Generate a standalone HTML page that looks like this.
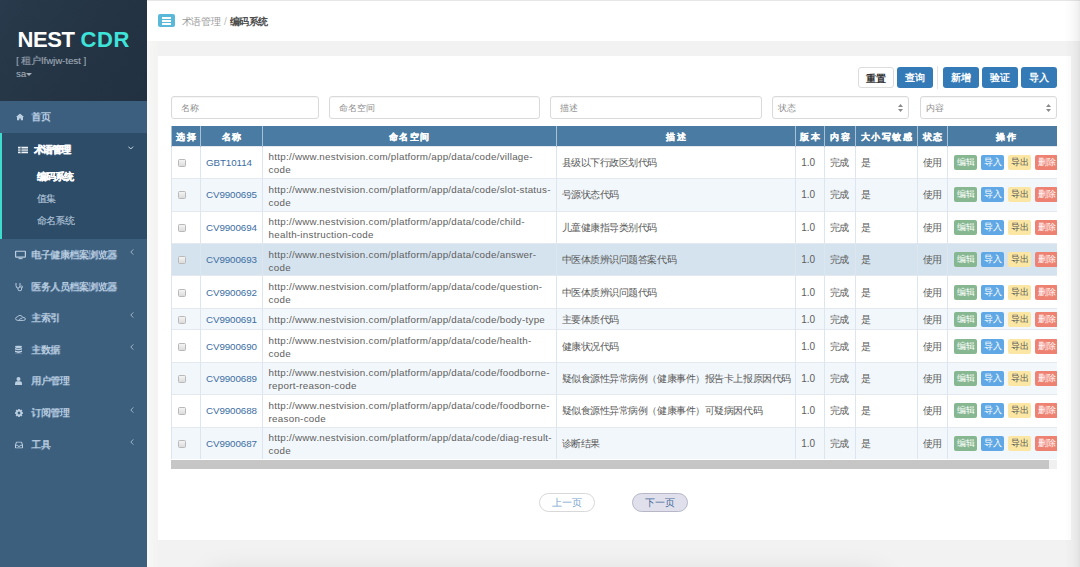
<!DOCTYPE html>
<html><head><meta charset="utf-8">
<style>
*{box-sizing:border-box;margin:0;padding:0}
html,body{width:1080px;height:567px;overflow:hidden}
body{position:relative;background:#f2f2f2;font-family:"Liberation Sans",sans-serif;color:#555}
.abs{position:absolute}
#side{left:0;top:0;width:147px;height:567px;background:#3c5f7e}
#logo{left:0;top:0;width:147px;height:101px;background:linear-gradient(120deg,#283a4b 0%,#243444 55%,#223141 100%)}
#logo .t{left:17.5px;top:27px;font-size:22px;line-height:25px;font-weight:bold;color:#fff;white-space:nowrap}
#logo .t .c{color:#3ee4da;letter-spacing:0.6px}#logo .t .n{letter-spacing:-0.45px}
#logo .ten{left:16px;top:55px;font-size:9.6px;color:#97a3af;white-space:nowrap;text-shadow:0.4px 0 0 rgba(151,163,175,0.5)}
#logo .sa{left:16px;top:68px;font-size:9.5px;color:#97a3af;white-space:nowrap;text-shadow:0.4px 0 0 rgba(151,163,175,0.5)}
.mi{position:absolute;left:0;width:147px;height:32px;color:#bcd0e3;font-size:9.6px;letter-spacing:-0.45px;font-weight:500;white-space:nowrap;text-shadow:0.6px 0 0 rgba(188,208,227,0.75),0 0.5px 0 rgba(188,208,227,0.5)}
.mi .tx{position:absolute;left:31px;top:10px;line-height:12px}
.mi .ic{position:absolute;left:15px;top:50%;transform:translateY(-50%)}
.mi .ch{position:absolute;left:129.5px;top:9.5px}.caret{display:inline-block;width:0;height:0;border-left:3px solid transparent;border-right:3px solid transparent;border-top:3.5px solid #a3aeb9;margin-left:0;vertical-align:middle}
#home{top:101px;background:#3c5f7f}
#open{left:0;top:133px;width:147px;height:106px;background:#2d4c68;border-left:2px solid #3ddccf}
.sub{position:absolute;left:34.5px;font-size:10px;letter-spacing:-0.6px;font-weight:500;color:#a9bfd3;white-space:nowrap;line-height:12px;text-shadow:0.5px 0 0 rgba(169,191,211,0.6)}
#hdr{left:147px;top:0;width:933px;height:41px;background:#fff;border-top:1px solid #e6e6e6}
#panel{left:158px;top:56px;width:913px;height:484px;background:#fff}
.inp{position:absolute;top:96px;height:23px;border:1px solid #dadada;border-radius:3px;background:#fff;font-size:9.4px;color:#8f8f8f;padding-left:8.5px;line-height:21px;box-shadow:inset 0 1px 1px rgba(0,0,0,0.04);white-space:nowrap}
.btn{position:absolute;top:67px;height:21px;border-radius:3px;font-size:9.5px;font-weight:bold;color:#fff;background:#337ab7;text-align:center;line-height:21px;white-space:nowrap}
table{position:absolute;left:171px;top:126px;border-collapse:collapse;table-layout:fixed;width:893px}
th{background:#4a7ba2;color:#fff;font-size:9.2px;font-weight:bold;height:20.3px;border-left:1px solid #a9c1d6;letter-spacing:1.5px;text-indent:1.5px;text-align:center;padding:3px 0 0 0;-webkit-text-stroke:0.2px #fff}
tr{height:32.4px}tr.hd{height:20.3px}tr.one{height:21.6px}td{border-left:1px solid #dde6ee;border-top:1px solid #e3e9ef;font-size:10px;color:#5e5e5e;padding:0 5px;vertical-align:middle;line-height:13px}
tr.s td{background:#f2f7fb}
tr.h td{background:#d5e3ee}

.ham{left:158px;top:14px;width:17px;height:13px;background:#5ab8d8;border-radius:2px;padding:3.2px 4.2px}
.ham i{display:block;height:1.4px;background:#fff;margin-bottom:1.75px}
.bc{left:181.5px;top:15.5px;font-size:10px;line-height:12px;white-space:nowrap;letter-spacing:-0.1px}
.bc .c1{color:#999}
.bc .sl{color:#bbb;margin:0 3px 0 3px}
.bc .c2{color:#4d4d4d;font-weight:bold;letter-spacing:-0.6px}
.sel{padding-left:5px}.sel .ar{position:absolute;right:5px;top:6.5px}
#tw{left:171px;top:126px;width:886px;height:334px;overflow:hidden}
#tw table{position:absolute;left:0;top:0}
td.cb i{display:block;width:8px;height:8px;border:1px solid #b9b9b9;border-radius:1.5px;background:linear-gradient(#f4f4f4,#dcdcdc);margin-left:0.5px;margin-top:1px}
td.cd{color:#3c6ea3;font-size:9.8px;letter-spacing:-0.1px}
td.url{white-space:nowrap;overflow:hidden;font-size:9.8px;letter-spacing:0.26px;padding-left:6px;padding-top:2px}tr.one td{padding-top:0}
td.zh{font-size:9.8px;letter-spacing:-0.45px;color:#5a5a5a;white-space:nowrap}
td.ver{font-size:10px}
td.op{white-space:nowrap;overflow:hidden;padding-left:6px}td.op b{display:inline-block;width:23px;height:15px;line-height:15px;border-radius:2px;font-size:8.5px;font-weight:normal;color:#fff;text-align:center;margin-right:4px}
td.op b.g{background:#86b790}
td.op b.bl{background:#60a8e5}
td.op b.y{background:#fbe7a3;color:#555}
td.op b.r{background:#ee8272}
.sb{left:171px;top:459.5px;width:886px;height:9px;background:#f0f0f0}
.sb i{position:absolute;left:0;top:0;width:878px;height:9px;background:#c6c6c6}
.pg{top:492.5px;width:56px;height:19px;border-radius:10px;font-size:9.5px;text-align:center;line-height:17px}
.p1{left:539px;border:1px solid #d8d8d8;color:#7aa6cf;background:#fff}
.p2{left:632px;border:1px solid #b7b7c8;color:#4a6c9a;background:#dfe0ec}
.shadow{left:220px;top:585px;width:650px;height:20px;box-shadow:0 0 30px 10px rgba(0,0,0,0.12)}
.rstrip{left:1064px;top:0;width:16px;height:567px;background:linear-gradient(90deg,rgba(0,0,0,0) 0%,rgba(0,0,0,0.02) 50%,rgba(0,0,0,0.05) 85%,rgba(0,0,0,0.08) 100%)}
</style></head><body>
<div id="side" class="abs">
  <div id="logo" class="abs">
    <div class="t abs"><span class="n">NEST</span> <span class="c">CDR</span></div>
    <div class="ten abs">[ 租户lfwjw-test ]</div>
    <div class="sa abs">sa<i class="caret"></i></div>
  </div>
  <div id="home" class="mi"><svg class="ic" style="left:15.5px" width="8" height="7" viewBox="0 0 8 7"><path d="M4 0 L0 3.6 L1 3.6 L1 7 L3.2 7 L3.2 5 L4.8 5 L4.8 7 L7 7 L7 3.6 L8 3.6 Z" fill="#bccfe1"/></svg><span class="tx">首页</span></div>
  <div id="open" class="abs">
    <div class="mi" style="top:0;left:-2px;color:#fff;font-weight:bold;font-size:9.6px;letter-spacing:-1px;-webkit-text-stroke:0.22px #fff"><svg class="ic" style="left:18px;margin-top:0.5px" width="10" height="7" viewBox="0 0 10 7"><rect x="0" y="0" width="10" height="7" fill="#eef2f6"/><rect x="0" y="2" width="10" height="0.9" fill="#2d4c68"/><rect x="0" y="4.2" width="10" height="0.9" fill="#2d4c68"/><rect x="2.6" y="0" width="0.8" height="7" fill="#2d4c68"/></svg><span class="tx" style="left:34px;margin-top:1px">术语管理</span><svg class="ch" style="left:128px;top:13px" width="5.5" height="4" viewBox="0 0 5.5 4"><path d="M0.4 0.6 L2.75 3 L5.1 0.6" fill="none" stroke="#dbe5ee" stroke-width="0.9"/></svg></div>
    <div class="sub" style="top:38px;color:#fff;font-weight:bold;font-size:9.6px;letter-spacing:-0.9px;-webkit-text-stroke:0.22px #fff">编码系统</div>
    <div class="sub" style="top:60px">值集</div>
    <div class="sub" style="top:82px">命名系统</div>
  </div>
  <div class="mi" style="top:239px"><svg class="ic" width="11" height="9" viewBox="0 0 11 9"><rect x="0.6" y="0.6" width="9.8" height="6" rx="0.6" fill="none" stroke="#bccfe1" stroke-width="1.2"/><rect x="3.5" y="7.6" width="4" height="1.2" fill="#bccfe1"/></svg><span class="tx">电子健康档案浏览器</span><svg class="ch" width="4" height="6" viewBox="0 0 4 6"><path d="M3.3 0.4 L0.8 3 L3.3 5.6" fill="none" stroke="#b3c4d2" stroke-width="0.85"/></svg></div>
  <div class="mi" style="top:271px"><svg class="ic" width="8" height="9" viewBox="0 0 8 9"><path d="M1 0.5 L1 3 Q1 5.6 3 5.6 Q5 5.6 5 3 L5 0.5 M3 5.6 L3 6.8 Q3 8.4 5 8.4 Q6.6 8.4 6.6 6.6 L6.6 5" fill="none" stroke="#bccfe1" stroke-width="1"/><circle cx="6.6" cy="4.4" r="1" fill="none" stroke="#bccfe1" stroke-width="0.8"/></svg><span class="tx">医务人员档案浏览器</span></div>
  <div class="mi" style="top:302px"><svg class="ic" width="11" height="6" viewBox="0 0 11 6"><path d="M3 5.4 Q0.6 5.4 0.6 3.6 Q0.6 2 2.4 2 Q3 0.4 5 0.4 Q7 0.4 7.6 2.4 Q10.4 2.2 10.4 4 Q10.4 5.4 8.4 5.4 Z M4 5.4 Q5.4 2.6 7.2 3.2" fill="none" stroke="#bccfe1" stroke-width="0.9"/></svg><span class="tx">主索引</span><svg class="ch" width="4" height="6" viewBox="0 0 4 6"><path d="M3.3 0.4 L0.8 3 L3.3 5.6" fill="none" stroke="#b3c4d2" stroke-width="0.85"/></svg></div>
  <div class="mi" style="top:334px"><svg class="ic" width="7" height="9" viewBox="0 0 7 9"><ellipse cx="3.5" cy="1.3" rx="3.5" ry="1.3" fill="#bccfe1"/><path d="M0 2.4 Q3.5 4 7 2.4 L7 4 Q3.5 5.6 0 4 Z M0 5 Q3.5 6.6 7 5 L7 6.6 Q3.5 8.2 0 6.6 Z M0 7.4 Q3.5 9 7 7.4 L7 7.8 Q3.5 9.4 0 7.8Z" fill="#bccfe1"/></svg><span class="tx">主数据</span><svg class="ch" width="4" height="6" viewBox="0 0 4 6"><path d="M3.3 0.4 L0.8 3 L3.3 5.6" fill="none" stroke="#b3c4d2" stroke-width="0.85"/></svg></div>
  <div class="mi" style="top:365px"><svg class="ic" width="7" height="8" viewBox="0 0 7 8"><circle cx="3.5" cy="2" r="2" fill="#bccfe1"/><path d="M0 8 L0 6.4 Q0 4.3 2 4.3 L5 4.3 Q7 4.3 7 6.4 L7 8 Z" fill="#bccfe1"/></svg><span class="tx">用户管理</span></div>
  <div class="mi" style="top:397px"><svg class="ic" width="8" height="8" viewBox="0 0 8 8"><path d="M3.2 0 L4.8 0 L5 1.3 L6.2 0.6 L7.4 1.8 L6.7 3 L8 3.2 L8 4.8 L6.7 5 L7.4 6.2 L6.2 7.4 L5 6.7 L4.8 8 L3.2 8 L3 6.7 L1.8 7.4 L0.6 6.2 L1.3 5 L0 4.8 L0 3.2 L1.3 3 L0.6 1.8 L1.8 0.6 L3 1.3 Z M4 2.6 A1.4 1.4 0 1 0 4.01 2.6 Z" fill="#bccfe1" fill-rule="evenodd"/></svg><span class="tx">订阅管理</span><svg class="ch" width="4" height="6" viewBox="0 0 4 6"><path d="M3.3 0.4 L0.8 3 L3.3 5.6" fill="none" stroke="#b3c4d2" stroke-width="0.85"/></svg></div>
  <div class="mi" style="top:429px"><svg class="ic" width="8" height="7" viewBox="0 0 8 7"><path d="M1.5 0.5 L6.5 0.5 L7.5 3.5 L7.5 6.5 L0.5 6.5 L0.5 3.5 Z" fill="none" stroke="#bccfe1" stroke-width="1"/><path d="M0.5 3.8 L2.6 3.8 L3 4.8 L5 4.8 L5.4 3.8 L7.5 3.8" fill="none" stroke="#bccfe1" stroke-width="0.9"/></svg><span class="tx">工具</span><svg class="ch" width="4" height="6" viewBox="0 0 4 6"><path d="M3.3 0.4 L0.8 3 L3.3 5.6" fill="none" stroke="#b3c4d2" stroke-width="0.85"/></svg></div>
</div>
<div id="hdr" class="abs"></div>
<div class="abs ham"><i></i><i></i><i></i></div>
<div class="abs bc"><span class="c1">术语管理</span><span class="sl">/</span><span class="c2">编码系统</span></div>
<div id="panel" class="abs"></div>
<div class="btn" style="left:858px;width:36px;background:#fff;border:1px solid #ddd;color:#333">重置</div>
<div class="btn" style="left:897px;width:36px">查询</div>
<div class="abs" style="left:937px;top:66px;width:1px;height:23px;background:#e3e3e3"></div>
<div class="btn" style="left:943px;width:36px">新增</div>
<div class="btn" style="left:982px;width:36px">验证</div>
<div class="btn" style="left:1021px;width:36px">导入</div>
<div class="inp" style="left:171px;width:148px">名称</div>
<div class="inp" style="left:329px;width:211px">命名空间</div>
<div class="inp" style="left:550px;width:212px">描述</div>
<div class="inp sel" style="left:772px;width:137px">状态<svg class="ar" width="5" height="8" viewBox="0 0 5 8"><path d="M2.5 0 L5 3 L0 3 Z M0 5 L5 5 L2.5 8 Z" fill="#8a8a8a"/></svg></div>
<div class="inp sel" style="left:920px;width:137px">内容<svg class="ar" width="5" height="8" viewBox="0 0 5 8"><path d="M2.5 0 L5 3 L0 3 Z M0 5 L5 5 L2.5 8 Z" fill="#8a8a8a"/></svg></div>
<div id="tw" class="abs"><table>
<colgroup><col style="width:29px"><col style="width:61.6px"><col style="width:293.9px"><col style="width:239.7px"><col style="width:28.6px"><col style="width:31.2px"><col style="width:61.9px"><col style="width:30.5px"><col style="width:116px"></colgroup>
<tr class="hd"><th>选择</th><th>名称</th><th>命名空间</th><th>描述</th><th>版本</th><th>内容</th><th>大小写敏感</th><th>状态</th><th>操作</th></tr>
<tr class=""><td class="cb"><i></i></td><td class="cd">GBT10114</td><td class="url">http://www.nestvision.com/platform/app/data/code/village-<br>code</td><td class="zh">县级以下行政区划代码</td><td class="ver">1.0</td><td class="zh">完成</td><td class="zh">是</td><td class="zh">使用</td><td class="op"><b class="g">编辑</b><b class="bl">导入</b><b class="y">导出</b><b class="r">删除</b></td></tr>
<tr class="s"><td class="cb"><i></i></td><td class="cd">CV9900695</td><td class="url">http://www.nestvision.com/platform/app/data/code/slot-status-<br>code</td><td class="zh">号源状态代码</td><td class="ver">1.0</td><td class="zh">完成</td><td class="zh">是</td><td class="zh">使用</td><td class="op"><b class="g">编辑</b><b class="bl">导入</b><b class="y">导出</b><b class="r">删除</b></td></tr>
<tr class=""><td class="cb"><i></i></td><td class="cd">CV9900694</td><td class="url">http://www.nestvision.com/platform/app/data/code/child-<br>health-instruction-code</td><td class="zh">儿童健康指导类别代码</td><td class="ver">1.0</td><td class="zh">完成</td><td class="zh">是</td><td class="zh">使用</td><td class="op"><b class="g">编辑</b><b class="bl">导入</b><b class="y">导出</b><b class="r">删除</b></td></tr>
<tr class="h"><td class="cb"><i></i></td><td class="cd">CV9900693</td><td class="url">http://www.nestvision.com/platform/app/data/code/answer-<br>code</td><td class="zh">中医体质辨识问题答案代码</td><td class="ver">1.0</td><td class="zh">完成</td><td class="zh">是</td><td class="zh">使用</td><td class="op"><b class="g">编辑</b><b class="bl">导入</b><b class="y">导出</b><b class="r">删除</b></td></tr>
<tr class=""><td class="cb"><i></i></td><td class="cd">CV9900692</td><td class="url">http://www.nestvision.com/platform/app/data/code/question-<br>code</td><td class="zh">中医体质辨识问题代码</td><td class="ver">1.0</td><td class="zh">完成</td><td class="zh">是</td><td class="zh">使用</td><td class="op"><b class="g">编辑</b><b class="bl">导入</b><b class="y">导出</b><b class="r">删除</b></td></tr>
<tr class="s one"><td class="cb"><i></i></td><td class="cd">CV9900691</td><td class="url">http://www.nestvision.com/platform/app/data/code/body-type</td><td class="zh">主要体质代码</td><td class="ver">1.0</td><td class="zh">完成</td><td class="zh">是</td><td class="zh">使用</td><td class="op"><b class="g">编辑</b><b class="bl">导入</b><b class="y">导出</b><b class="r">删除</b></td></tr>
<tr class=""><td class="cb"><i></i></td><td class="cd">CV9900690</td><td class="url">http://www.nestvision.com/platform/app/data/code/health-<br>code</td><td class="zh">健康状况代码</td><td class="ver">1.0</td><td class="zh">完成</td><td class="zh">是</td><td class="zh">使用</td><td class="op"><b class="g">编辑</b><b class="bl">导入</b><b class="y">导出</b><b class="r">删除</b></td></tr>
<tr class="s"><td class="cb"><i></i></td><td class="cd">CV9900689</td><td class="url">http://www.nestvision.com/platform/app/data/code/foodborne-<br>report-reason-code</td><td class="zh">疑似食源性异常病例（健康事件）报告卡上报原因代码</td><td class="ver">1.0</td><td class="zh">完成</td><td class="zh">是</td><td class="zh">使用</td><td class="op"><b class="g">编辑</b><b class="bl">导入</b><b class="y">导出</b><b class="r">删除</b></td></tr>
<tr class=""><td class="cb"><i></i></td><td class="cd">CV9900688</td><td class="url">http://www.nestvision.com/platform/app/data/code/foodborne-<br>reason-code</td><td class="zh">疑似食源性异常病例（健康事件）可疑病因代码</td><td class="ver">1.0</td><td class="zh">完成</td><td class="zh">是</td><td class="zh">使用</td><td class="op"><b class="g">编辑</b><b class="bl">导入</b><b class="y">导出</b><b class="r">删除</b></td></tr>
<tr class="s"><td class="cb"><i></i></td><td class="cd">CV9900687</td><td class="url">http://www.nestvision.com/platform/app/data/code/diag-result-<br>code</td><td class="zh">诊断结果</td><td class="ver">1.0</td><td class="zh">完成</td><td class="zh">是</td><td class="zh">使用</td><td class="op"><b class="g">编辑</b><b class="bl">导入</b><b class="y">导出</b><b class="r">删除</b></td></tr>
</table></div>
<div class="abs sb"><i></i></div>
<div class="abs pg p1">上一页</div>
<div class="abs pg p2">下一页</div>
<div class="abs shadow"></div>
<div class="abs rstrip"></div>
<div class="abs" style="left:147px;top:41px;width:11px;height:526px;background:linear-gradient(90deg,#f8f9fa 0%,#f5f5f4 40%,#f3f3f2 100%)"></div>

</body></html>
